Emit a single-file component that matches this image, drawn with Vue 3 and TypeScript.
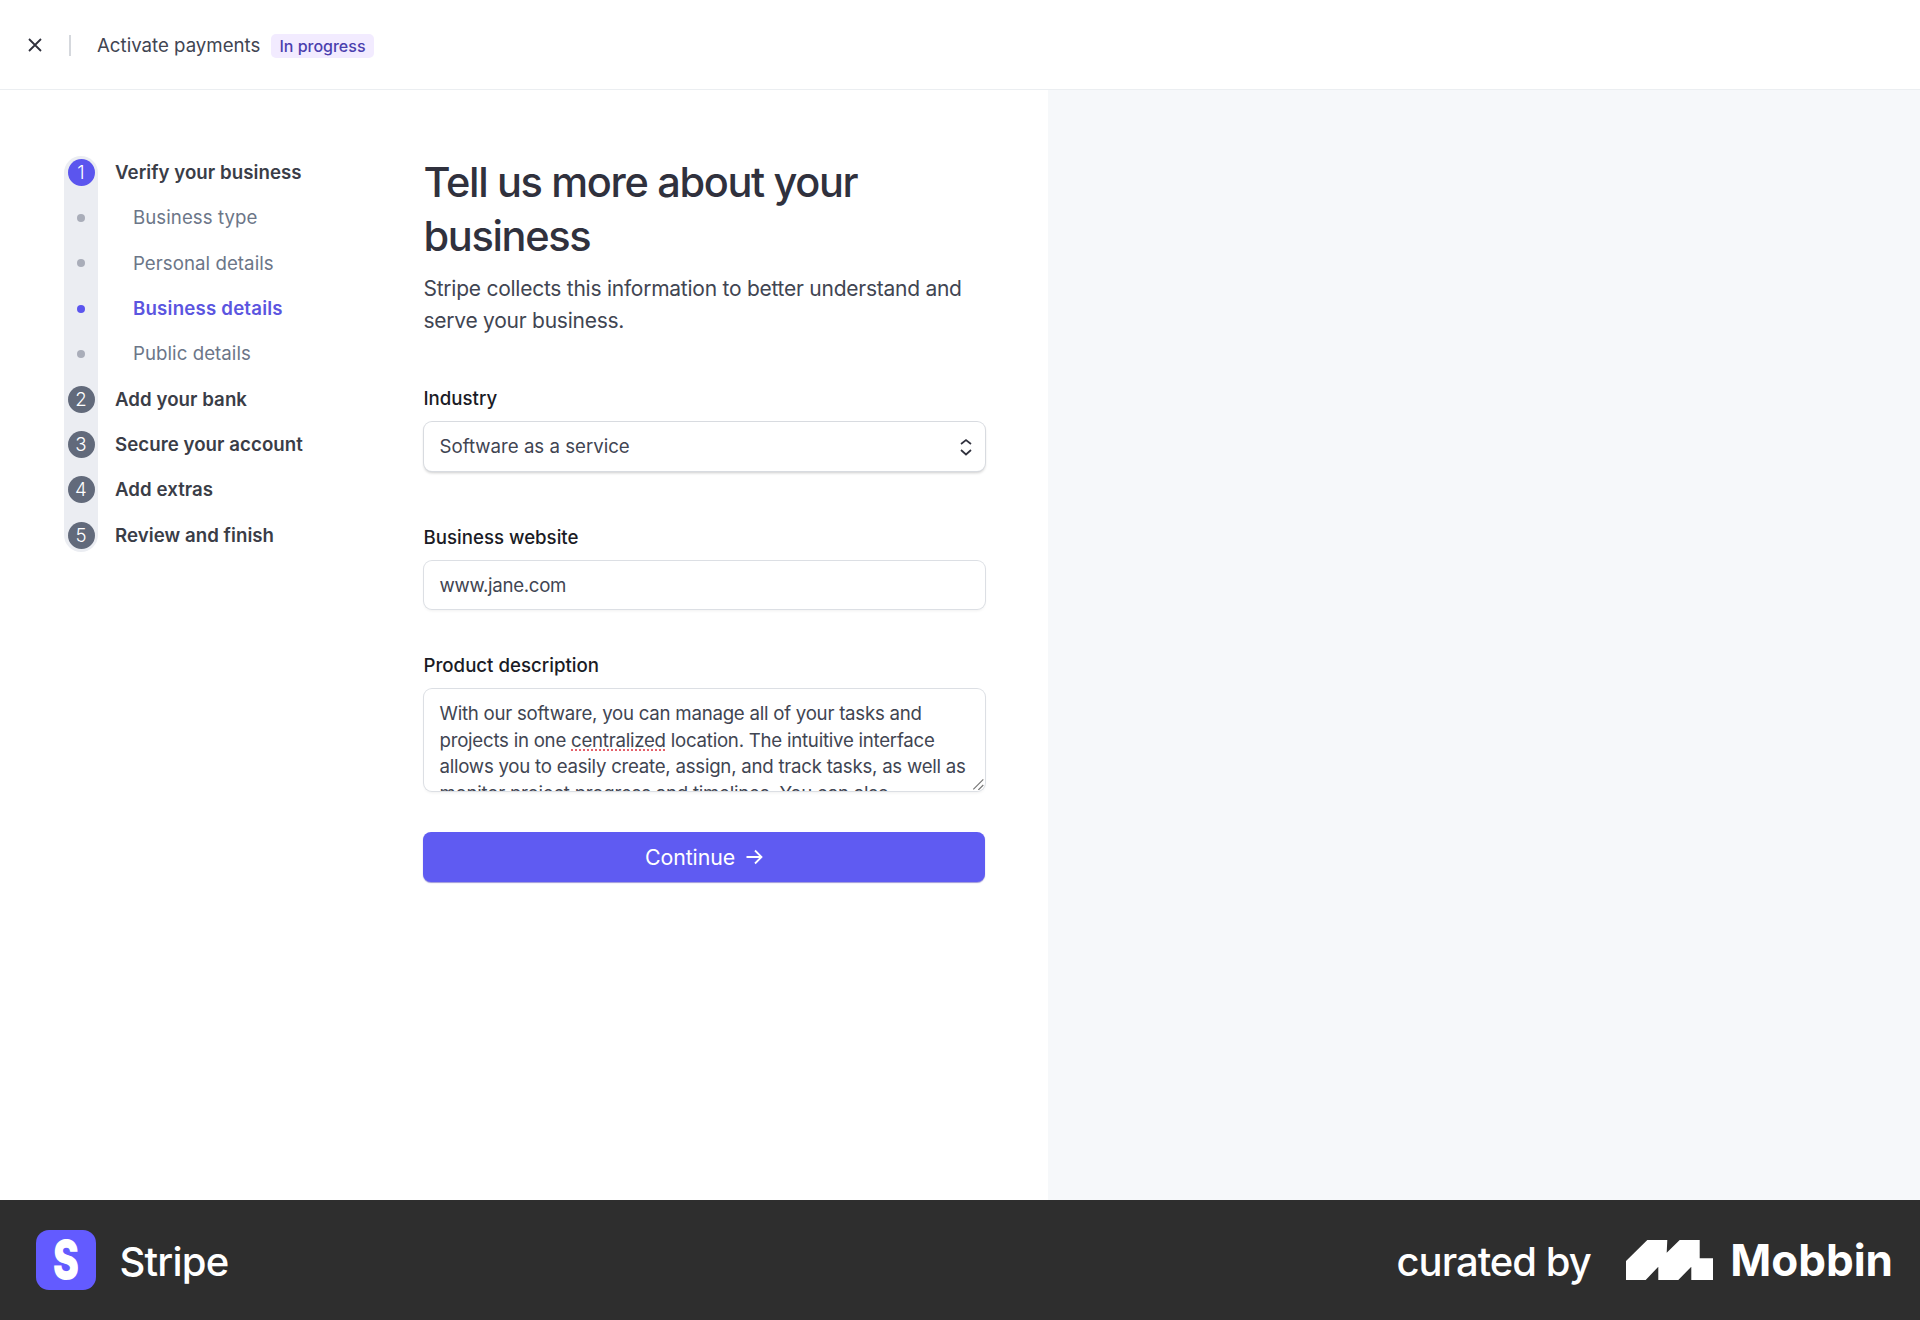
<script setup lang="ts">
interface Step {
  label: string
  num?: number
  active?: boolean
  sub?: boolean
}

const steps: Step[] = [
  { label: 'Verify your business', num: 1, active: true },
  { label: 'Business type', sub: true },
  { label: 'Personal details', sub: true },
  { label: 'Business details', sub: true, active: true },
  { label: 'Public details', sub: true },
  { label: 'Add your bank', num: 2 },
  { label: 'Secure your account', num: 3 },
  { label: 'Add extras', num: 4 },
  { label: 'Review and finish', num: 5 }
]
</script>

<template>
  <div class="page">
    <header class="topbar">
      <svg class="close" width="16" height="16" viewBox="0 0 16 16" fill="none">
        <path d="M2 2l12 12M14 2L2 14" stroke="#30313d" stroke-width="1.8" />
      </svg>
      <span class="divider"></span>
      <span class="title">Activate payments</span>
      <span class="badge">In progress</span>
    </header>

    <main class="content">
      <section class="left">
        <nav class="steps">
          <div
            v-for="step in steps"
            :key="step.label"
            class="step"
            :class="{ sub: step.sub, active: step.active }"
          >
            <span class="marker">
              <span v-if="step.sub" class="dot"></span>
              <span v-else class="num">{{ step.num }}</span>
            </span>
            <span class="step-label">{{ step.label }}</span>
          </div>
        </nav>

        <form class="form" @submit.prevent>
          <h1>Tell us more about your business</h1>
          <p class="intro">Stripe collects this information to better understand and serve your business.</p>

          <div class="field industry">
            <label>Industry</label>
            <div class="control select">
              <span>Software as a service</span>
              <svg width="12" height="18" viewBox="0 0 12 18" fill="none">
                <path d="M1 6l5-4 5 4M1 12l5 4.5 5-4.5" stroke="#30313d" stroke-width="1.7" />
              </svg>
            </div>
          </div>

          <div class="field website">
            <label>Business website</label>
            <div class="control input">www.jane.com</div>
          </div>

          <div class="field product">
            <label>Product description</label>
            <div class="control area">
              <div>With our software, you can manage all of your tasks and projects in one <span class="typo">centralized</span> location. The intuitive interface allows you to easily create, assign, and track tasks, as well as monitor project progress and timelines. You can also</div>
              <svg class="grip" width="12" height="12" viewBox="0 0 12 12" fill="none">
                <path d="M1.3 11.3l10-10M6.3 12l5-5" stroke="#777" stroke-width="1.2" />
              </svg>
            </div>
          </div>

          <button class="continue" type="button">
            Continue
            <svg width="17" height="16" viewBox="0 0 17 16" fill="none">
              <path d="M0.5 8h15M9 1.5L15.5 8 9 14.5" stroke="#fff" stroke-width="1.8" />
            </svg>
          </button>
        </form>
      </section>
      <aside class="right"></aside>
    </main>

    <footer class="footer">
      <div class="brand">
        <span class="app-icon"><span class="app-letter">S</span></span>
        <span class="app-name">Stripe</span>
      </div>
      <div class="curated">
        <span class="curated-text">curated by</span>
        <svg width="87" height="40" viewBox="0 0 87 40" fill="#fff">
          <path d="M0 21L21.3 0h20l-.6 12.7L53.7 0h20v18.3H87V40H65.3V26.7L52.3 40h-20V26.7L19.700 40H0z" />
        </svg>
        <span class="mobbin">Mobbin</span>
      </div>
    </footer>
  </div>
</template>

<style scoped>
.page {
  width: 1920px;
  height: 1320px;
  display: flex;
  flex-direction: column;
  font-family: Inter, "Liberation Sans", sans-serif;
  background: #fff;
  color: #30313d;
}

.topbar {
  height: 90px;
  box-sizing: border-box;
  border-bottom: 1px solid #ebeef1;
  display: flex;
  align-items: center;
  padding: 1px 0 0 27px;
}

.divider {
  width: 2px;
  height: 21px;
  background: #d5d8dd;
  margin: 0 26px 0 26px;
}

.title {
  font-size: 18.67px;
  color: #414552;
  margin-top: 1px;
}

.badge {
  margin: 1px 0 0 11px;
  height: 24px;
  padding: 0 8px;
  border-radius: 5px;
  background: #f2ebff;
  color: #4b3fae;
  font-size: 16px;
  font-weight: 500;
  line-height: 24px;
}

.content {
  flex: 1;
  display: flex;
  min-height: 0;
}

.left {
  width: 1048px;
  display: flex;
  padding: 65px 0 0 64px;
  box-sizing: border-box;
}

.right {
  flex: 1;
  background: #f6f8fa;
}

.steps {
  width: 359.5px;
  flex: none;
  align-self: flex-start;
  position: relative;
  margin-top: -5px;
}

.steps::before {
  content: "";
  position: absolute;
  left: 0;
  top: 6px;
  bottom: 6px;
  width: 34px;
  border-radius: 17px;
  background: #ebedf2;
}

.step {
  position: relative;
  height: 45.33px;
  display: flex;
  align-items: center;
  font-size: 18.67px;
  font-weight: 600;
  letter-spacing: 0.05px;
  color: #3a3d47;
}

.marker {
  width: 34px;
  display: flex;
  justify-content: center;
  flex: none;
}

.num {
  width: 27px;
  height: 27px;
  border-radius: 50%;
  background: #626a7b;
  color: #fff;
  font-size: 18.67px;
  font-weight: 300;
  line-height: 27px;
  text-align: center;
}

.step.active .num {
  background: #5b55ee;
}

.dot {
  width: 8px;
  height: 8px;
  border-radius: 50%;
  background: #a9adb9;
}

.step-label {
  margin-left: 17px;
}

.step.sub .step-label {
  margin-left: 35px;
  font-weight: 400;
  color: #6c7688;
}

.step.sub.active .step-label {
  font-weight: 600;
  letter-spacing: 0.2px;
  color: #5b55e0;
}

.step.sub.active .dot {
  background: #5b55ee;
}

.form {
  width: 561px;
  flex: none;
}

h1 {
  margin: 0;
  font-size: 41.5px;
  line-height: 54px;
  font-weight: 500;
  letter-spacing: -1.35px;
  color: #30313d;
}

.intro {
  margin: 10px 0 0;
  font-size: 21px;
  line-height: 32px;
  letter-spacing: -0.25px;
  color: #414552;
}

.field label {
  display: block;
  font-size: 18.67px;
  line-height: 24px;
  font-weight: 500;
  color: #1a1b25;
  margin-bottom: 11px;
}

.industry {
  margin-top: 50px;
}

.website {
  margin-top: 55px;
}

.product {
  margin-top: 45px;
}

.control {
  box-sizing: border-box;
  border-radius: 8px;
  background: #fff;
  box-shadow: 0 0 0 1px #dcdfe4, 0 2px 3px rgba(0, 0, 0, 0.06);
  font-size: 18.67px;
  color: #414552;
}

.select {
  height: 49px;
  padding: 0 13px 0 16px;
  display: flex;
  align-items: center;
  justify-content: space-between;
  box-shadow: 0 0 0 1px #d8dbe0, 0 2px 3px rgba(0, 0, 0, 0.2);
}

.input {
  height: 48px;
  padding: 1px 16px 0;
  display: flex;
  align-items: center;
  letter-spacing: -0.3px;
}

.area {
  position: relative;
  height: 102px;
  padding: 12px 16px 0;
  line-height: 26.67px;
  letter-spacing: -0.25px;
  overflow: hidden;
}

.typo {
  text-decoration: underline dotted #e5606a 2px;
  text-underline-offset: 3px;
}

.grip {
  position: absolute;
  right: 1px;
  bottom: 1px;
}

.continue {
  margin-top: 41px;
  width: 562px;
  margin-left: -0.5px;
  height: 50px;
  border: none;
  border-radius: 8px;
  background: #5f5bf2;
  box-shadow: 0 1px 1px rgba(60, 50, 180, 0.5);
  color: #fff;
  font-family: inherit;
  font-size: 21.33px;
  font-weight: 400;
  letter-spacing: -0.1px;
  display: flex;
  align-items: center;
  justify-content: center;
  gap: 11px;
}

.footer {
  height: 120px;
  flex: none;
  background: #2e2e2e;
  color: #fff;
  display: flex;
  align-items: center;
  justify-content: space-between;
  padding: 0 27px 0 36px;
}

.brand {
  display: flex;
  align-items: center;
}

.app-icon {
  width: 60px;
  height: 60px;
  border-radius: 13px;
  background: #635bff;
  display: flex;
  align-items: center;
  justify-content: center;
}

.app-letter {
  font-size: 54px;
  font-weight: 900;
  line-height: 1;
  transform: scaleX(0.72);
}

.app-name {
  margin: 2px 0 0 23.5px;
  font-size: 40px;
  font-weight: 500;
  letter-spacing: -0.8px;
}

.curated {
  display: flex;
  align-items: center;
}

.curated-text {
  margin: 2px 35.5px 0 0;
  font-size: 40px;
  font-weight: 500;
  letter-spacing: -1px;
}

.mobbin {
  margin-left: 17px;
  font-size: 44px;
  font-weight: 700;
  letter-spacing: 0;
}
</style>
